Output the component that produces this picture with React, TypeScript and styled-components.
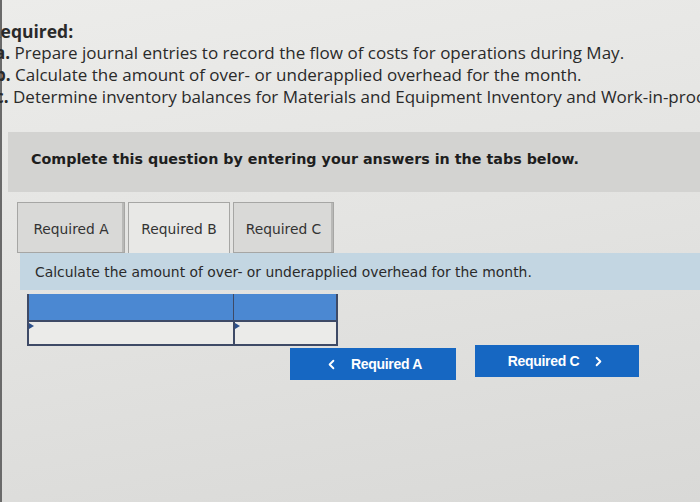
import React from "react";
import styled, { createGlobalStyle } from "styled-components";
import { ChevronLeft, ChevronRight } from "lucide-react";

const GlobalStyle = createGlobalStyle`
  html, body {
    margin: 0;
    padding: 0;
    overflow: hidden;
  }
  body {
    background: linear-gradient(170deg, #ececea 0%, #e4e4e2 45%, #d9d9d7 100%);
  }
`;

const Page = styled.div`
  width: 700px;
  height: 502px;
  box-sizing: border-box;
  padding: 20px 0 0 8px;
  box-shadow: inset 2px 0 0 #6a6a6a;
  overflow: hidden;
`;

const Intro = styled.div`
  font-family: "Open Sans", "Liberation Sans", sans-serif;
  font-size: 17px;
  line-height: 22px;
  color: #2a2a2a;
  white-space: nowrap;
`;

const IntroTitle = styled.div`
  margin-left: -19px;
  font-weight: bold;
  font-size: 17.5px;
`;

const IntroLine = styled.div`
  margin-left: -13px;
`;

const Letter = styled.span`
  font-weight: bold;
`;

const QuestionPanel = styled.div`
  margin-top: 24px;
  height: 60px;
  box-sizing: border-box;
  padding: 18px 23px;
  background: #d3d3d1;
  font-family: "DejaVu Sans", Verdana, sans-serif;
  font-weight: bold;
  font-size: 14.3px;
  line-height: 18px;
  color: #1e1e1e;
`;

const TabRow = styled.div`
  display: flex;
  gap: 3px;
  margin: 10px 0 0 9px;
`;

const Tab = styled.div<{ $active?: boolean; $width: number }>`
  width: ${(p) => p.$width}px;
  height: 51px;
  box-sizing: border-box;
  display: flex;
  align-items: center;
  justify-content: center;
  padding-top: 2px;
  border: 1px solid #a6a6a4;
  border-bottom: ${(p) => (p.$active ? "none" : "1px solid #a6a6a4")};
  box-shadow: ${(p) => (p.$active ? "none" : "inset -2px 0 0 #b9b9b7")};
  background: ${(p) => (p.$active ? "#e8e8e6" : "#d9d9d7")};
  font-family: "DejaVu Sans", Verdana, sans-serif;
  font-size: 13.8px;
  color: #333;
`;

const Band = styled.div`
  margin-left: 12px;
  height: 37px;
  box-sizing: border-box;
  padding: 0 15px;
  display: flex;
  align-items: center;
  background: #c3d6e2;
  font-family: "DejaVu Sans", Verdana, sans-serif;
  font-size: 13.9px;
  color: #2a2a2a;
`;

const AnswerTable = styled.div`
  margin: 4px 0 0 19px;
  width: 311px;
  box-sizing: border-box;
  display: grid;
  grid-template-columns: 204px 1fr;
  border: 2px solid #3e4a66;
  border-top: none;
`;

const HeadCell = styled.div`
  height: 26px;
  background: #4b88d2;
  border-bottom: 2px solid #3e4a66;
  & + & {
    border-left: 1px solid #3e4a66;
  }
`;

const BodyCell = styled.div<{ $split?: boolean }>`
  position: relative;
  height: 22px;
  background: #ebebe9;
  border-left: ${(p) => (p.$split ? "2px solid #3e4a66" : "none")};
  &::before {
    content: "";
    position: absolute;
    left: 0;
    top: 1px;
    border-left: 5px solid #2b4f8a;
    border-top: 3px solid transparent;
    border-bottom: 3px solid transparent;
  }
`;

const NavRow = styled.div`
  display: flex;
  align-items: flex-start;
  gap: 19px;
  margin: 2px 0 0 282px;
`;

const NavButton = styled.button<{ $width: number; $lift?: number }>`
  width: ${(p) => p.$width}px;
  height: 32px;
  margin-top: ${(p) => (p.$lift ? -p.$lift : 0)}px;
  display: flex;
  align-items: center;
  justify-content: center;
  gap: 12px;
  border: none;
  background: #1667c2;
  color: #fff;
  font-family: "Liberation Sans", Arial, sans-serif;
  font-weight: bold;
  font-size: 14px;
  letter-spacing: -0.3px;
  cursor: pointer;
`;

export default function App() {
  return (
    <>
      <GlobalStyle />
      <Page>
        <Intro>
          <IntroTitle>Required:</IntroTitle>
          <IntroLine>
            <Letter>a.</Letter> Prepare journal entries to record the flow of costs for operations during May.
          </IntroLine>
          <IntroLine>
            <Letter>b.</Letter> Calculate the amount of over- or underapplied overhead for the month.
          </IntroLine>
          <IntroLine>
            <Letter>c.</Letter> Determine inventory balances for Materials and Equipment Inventory and Work-in-process Inventory.
          </IntroLine>
        </Intro>
        <QuestionPanel>
          Complete this question by entering your answers in the tabs below.
        </QuestionPanel>
        <TabRow>
          <Tab $width={108}>Required A</Tab>
          <Tab $width={102} $active>
            Required B
          </Tab>
          <Tab $width={101}>Required C</Tab>
        </TabRow>
        <Band>Calculate the amount of over- or underapplied overhead for the month.</Band>
        <AnswerTable>
          <HeadCell />
          <HeadCell />
          <BodyCell />
          <BodyCell $split />
        </AnswerTable>
        <NavRow>
          <NavButton $width={166}>
            <ChevronLeft size={15} strokeWidth={3} />
            Required A
          </NavButton>
          <NavButton $width={164} $lift={3}>
            Required C
            <ChevronRight size={15} strokeWidth={3} />
          </NavButton>
        </NavRow>
      </Page>
    </>
  );
}
